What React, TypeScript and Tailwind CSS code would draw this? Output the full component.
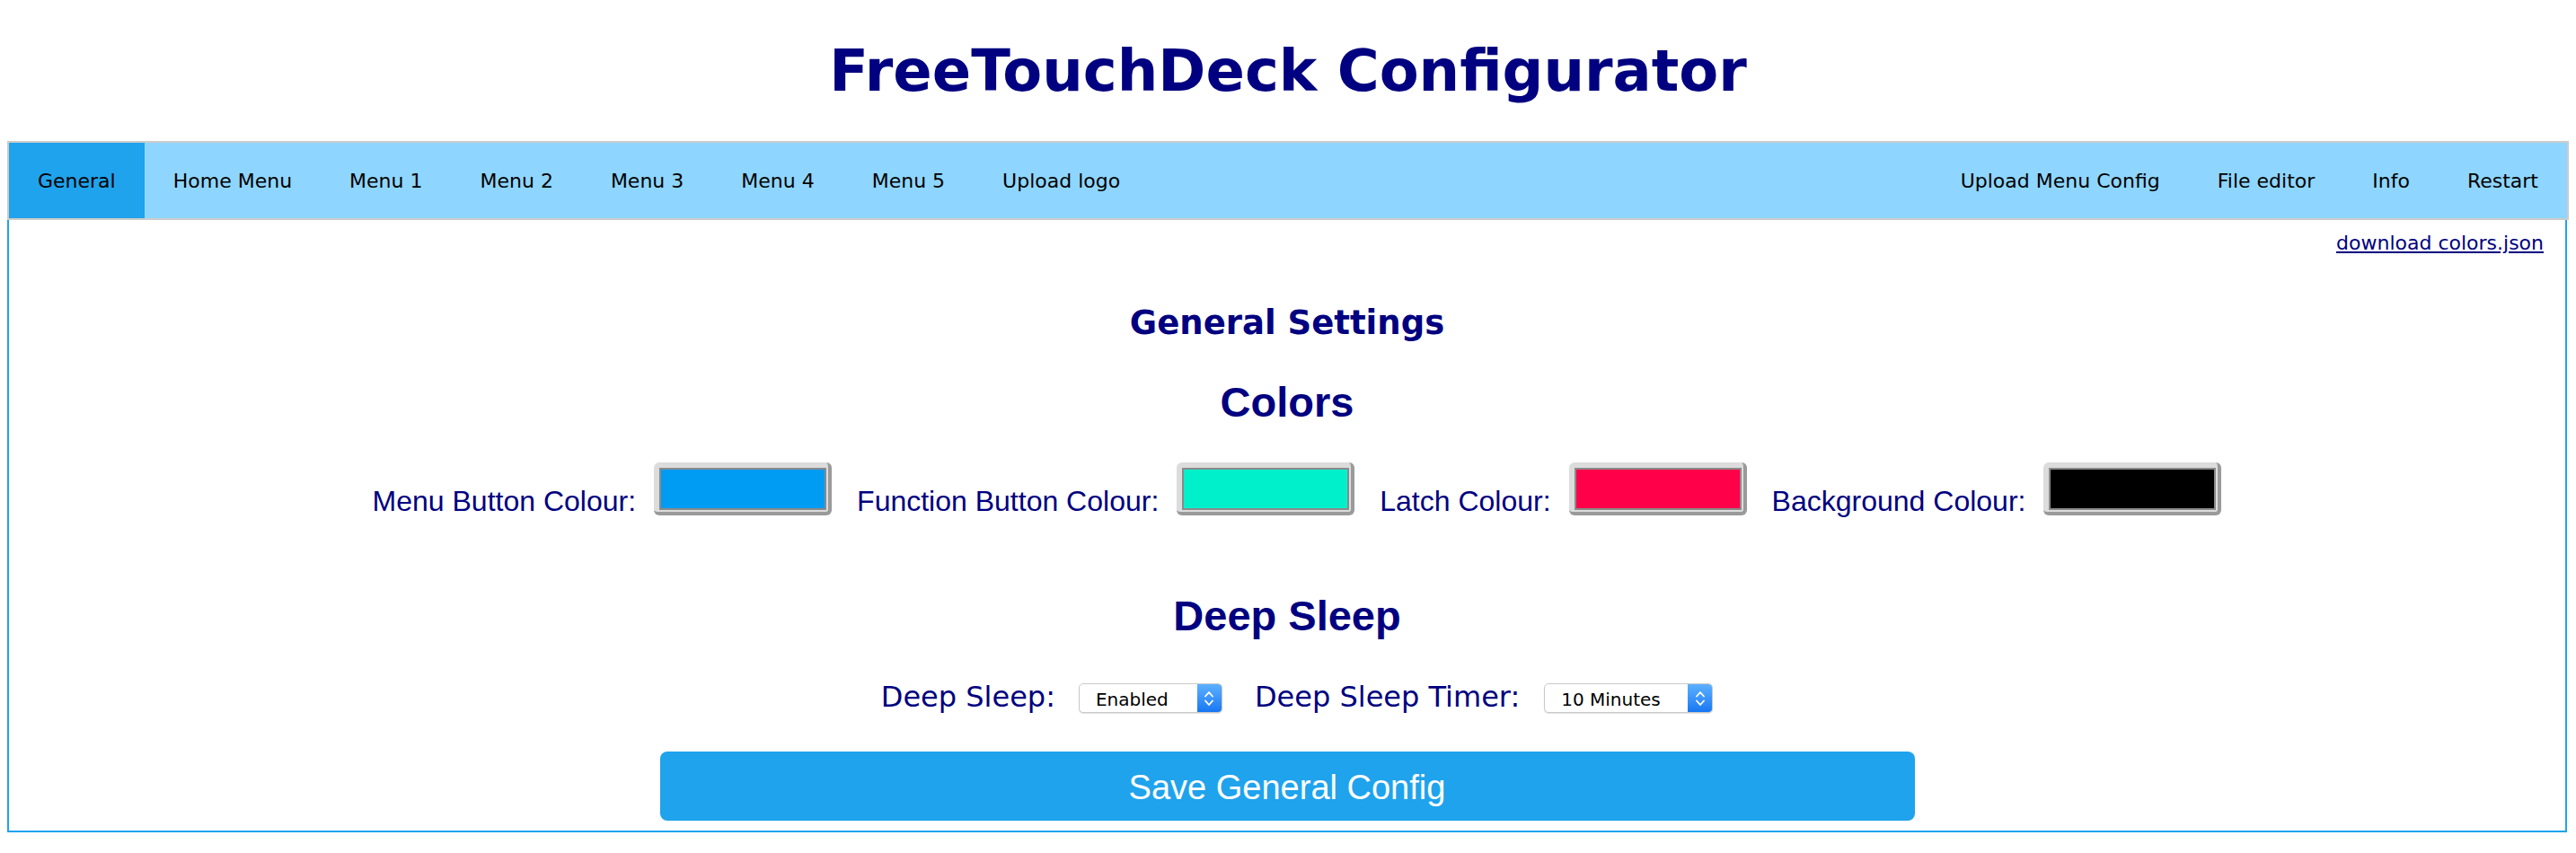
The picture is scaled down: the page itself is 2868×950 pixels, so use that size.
import type { ReactNode } from 'react';

const leftTabs = ['General', 'Home Menu', 'Menu 1', 'Menu 2', 'Menu 3', 'Menu 4', 'Menu 5', 'Upload logo'];
const rightTabs = ['Upload Menu Config', 'File editor', 'Info', 'Restart'];

const swatches = [
  { label: 'Menu Button Colour:', color: 'bg-[#009bf3]' },
  { label: 'Function Button Colour:', color: 'bg-[#00f0cb]' },
  { label: 'Latch Colour:', color: 'bg-[#ff0049]' },
  { label: 'Background Colour:', color: 'bg-[#000000]' }
];

const Tab = ({ name, active }: { name: string; active?: boolean }) => (
  <div
    className={`flex h-full items-center px-[32px] ${active ? 'bg-[#1fa3ec]' : ''}`}
  >
    {name}
  </div>
);

const Swatch = ({ color }: { color: string }) => (
  <div className="h-[59px] w-[198px] rounded-[6px] border-r-[4px] border-b-[4px] border-[#9a9a9a] bg-[#dcdcdc] pt-[6px] pr-[2px] pb-[2px] pl-[6px]">
    <div className={`h-full w-full border-2 border-[#8a8a8a] ${color}`} />
  </div>
);

const Select = ({ value, width }: { value: string; width: string }) => (
  <div
    className={`flex h-[33px] ${width} overflow-hidden rounded-[5px] border border-[#c9c9c9] bg-white shadow-[0_1px_1px_rgba(0,0,0,0.12)]`}
  >
    <div className="flex flex-1 items-center pt-[2px] pl-[18px] font-['DejaVu_Sans',sans-serif] text-[20px] leading-none text-black">
      {value}
    </div>
    <div className="flex w-[27px] items-center justify-center bg-gradient-to-b from-[#5cb0ff] to-[#1677f2]">
      <svg width="14" height="22" viewBox="0 0 14 22" fill="none">
        <path d="M3 8.5 L7 4 L11 8.5" stroke="white" strokeWidth="1.8" strokeLinecap="round" strokeLinejoin="round" />
        <path d="M3 13.5 L7 18 L11 13.5" stroke="white" strokeWidth="1.8" strokeLinecap="round" strokeLinejoin="round" />
      </svg>
    </div>
  </div>
);

const Heading = ({ children, className }: { children: ReactNode; className: string }) => (
  <h3
    className={`text-center font-['Liberation_Sans',Arial,sans-serif] text-[47px] font-bold leading-[54px] text-[#000080] ${className}`}
  >
    {children}
  </h3>
);

export default function App() {
  return (
    <div className="min-h-[950px] bg-white px-[8px]">
      <h1 className="pt-[42px] text-center font-['DejaVu_Sans',Verdana,sans-serif] text-[64px] font-bold leading-[74px] text-[#000080]">
        FreeTouchDeck Configurator
      </h1>

      <nav className="mt-[41px] flex h-[88px] justify-between border-2 border-[#cccccc] bg-[#8ed6ff] font-['DejaVu_Sans',Verdana,sans-serif] text-[22px] text-black">
        <div className="flex">
          {leftTabs.map((t, i) => (
            <Tab key={t} name={t} active={i === 0} />
          ))}
        </div>
        <div className="flex">
          {rightTabs.map((t) => (
            <Tab key={t} name={t} />
          ))}
        </div>
      </nav>

      <main className="mr-[2px] flex flex-col border-2 border-t-0 border-[#1fa3ec] pb-[11px]">
        <div className="mt-[13px] flex justify-end pr-[24px]">
          <a
            href="#"
            className="font-['DejaVu_Sans',Verdana,sans-serif] text-[22px] leading-[26px] text-[#000080] underline"
          >
            download colors.json
          </a>
        </div>

        <h2 className="mt-[54px] text-center font-['DejaVu_Sans',Verdana,sans-serif] text-[37px] font-bold leading-[43px] text-[#000080]">
          General Settings
        </h2>

        <Heading className="mt-[40px]">Colors</Heading>

        <div className="mt-[40px] flex items-end justify-center pl-[22px] font-['Liberation_Sans',Arial,sans-serif] text-[32px] leading-[32px] text-[#000080]">
          {swatches.map((s, i) => (
            <div key={s.label} className={`flex items-end ${i < swatches.length - 1 ? 'mr-[28px]' : ''}`}>
              <span className="mr-[20px]">{s.label}</span>
              <Swatch color={s.color} />
            </div>
          ))}
        </div>

        <Heading className="mt-[85px]">Deep Sleep</Heading>

        <div className="mt-[46px] flex items-end justify-center pl-[22px] font-['DejaVu_Sans',Verdana,sans-serif] text-[32px] leading-[35px] text-[#000080]">
          <span className="mr-[26px]">Deep Sleep:</span>
          <Select value="Enabled" width="w-[160px]" />
          <span className="mr-[27px] ml-[36px]">Deep Sleep Timer:</span>
          <Select value="10 Minutes" width="w-[188px]" />
        </div>

        <button className="mx-auto mt-[43px] h-[77px] w-[1397px] rounded-[8px] bg-[#1fa3ec] pt-[4px] font-['Liberation_Sans',Arial,sans-serif] text-[38px] text-white">
          Save General Config
        </button>
      </main>
    </div>
  );
}
